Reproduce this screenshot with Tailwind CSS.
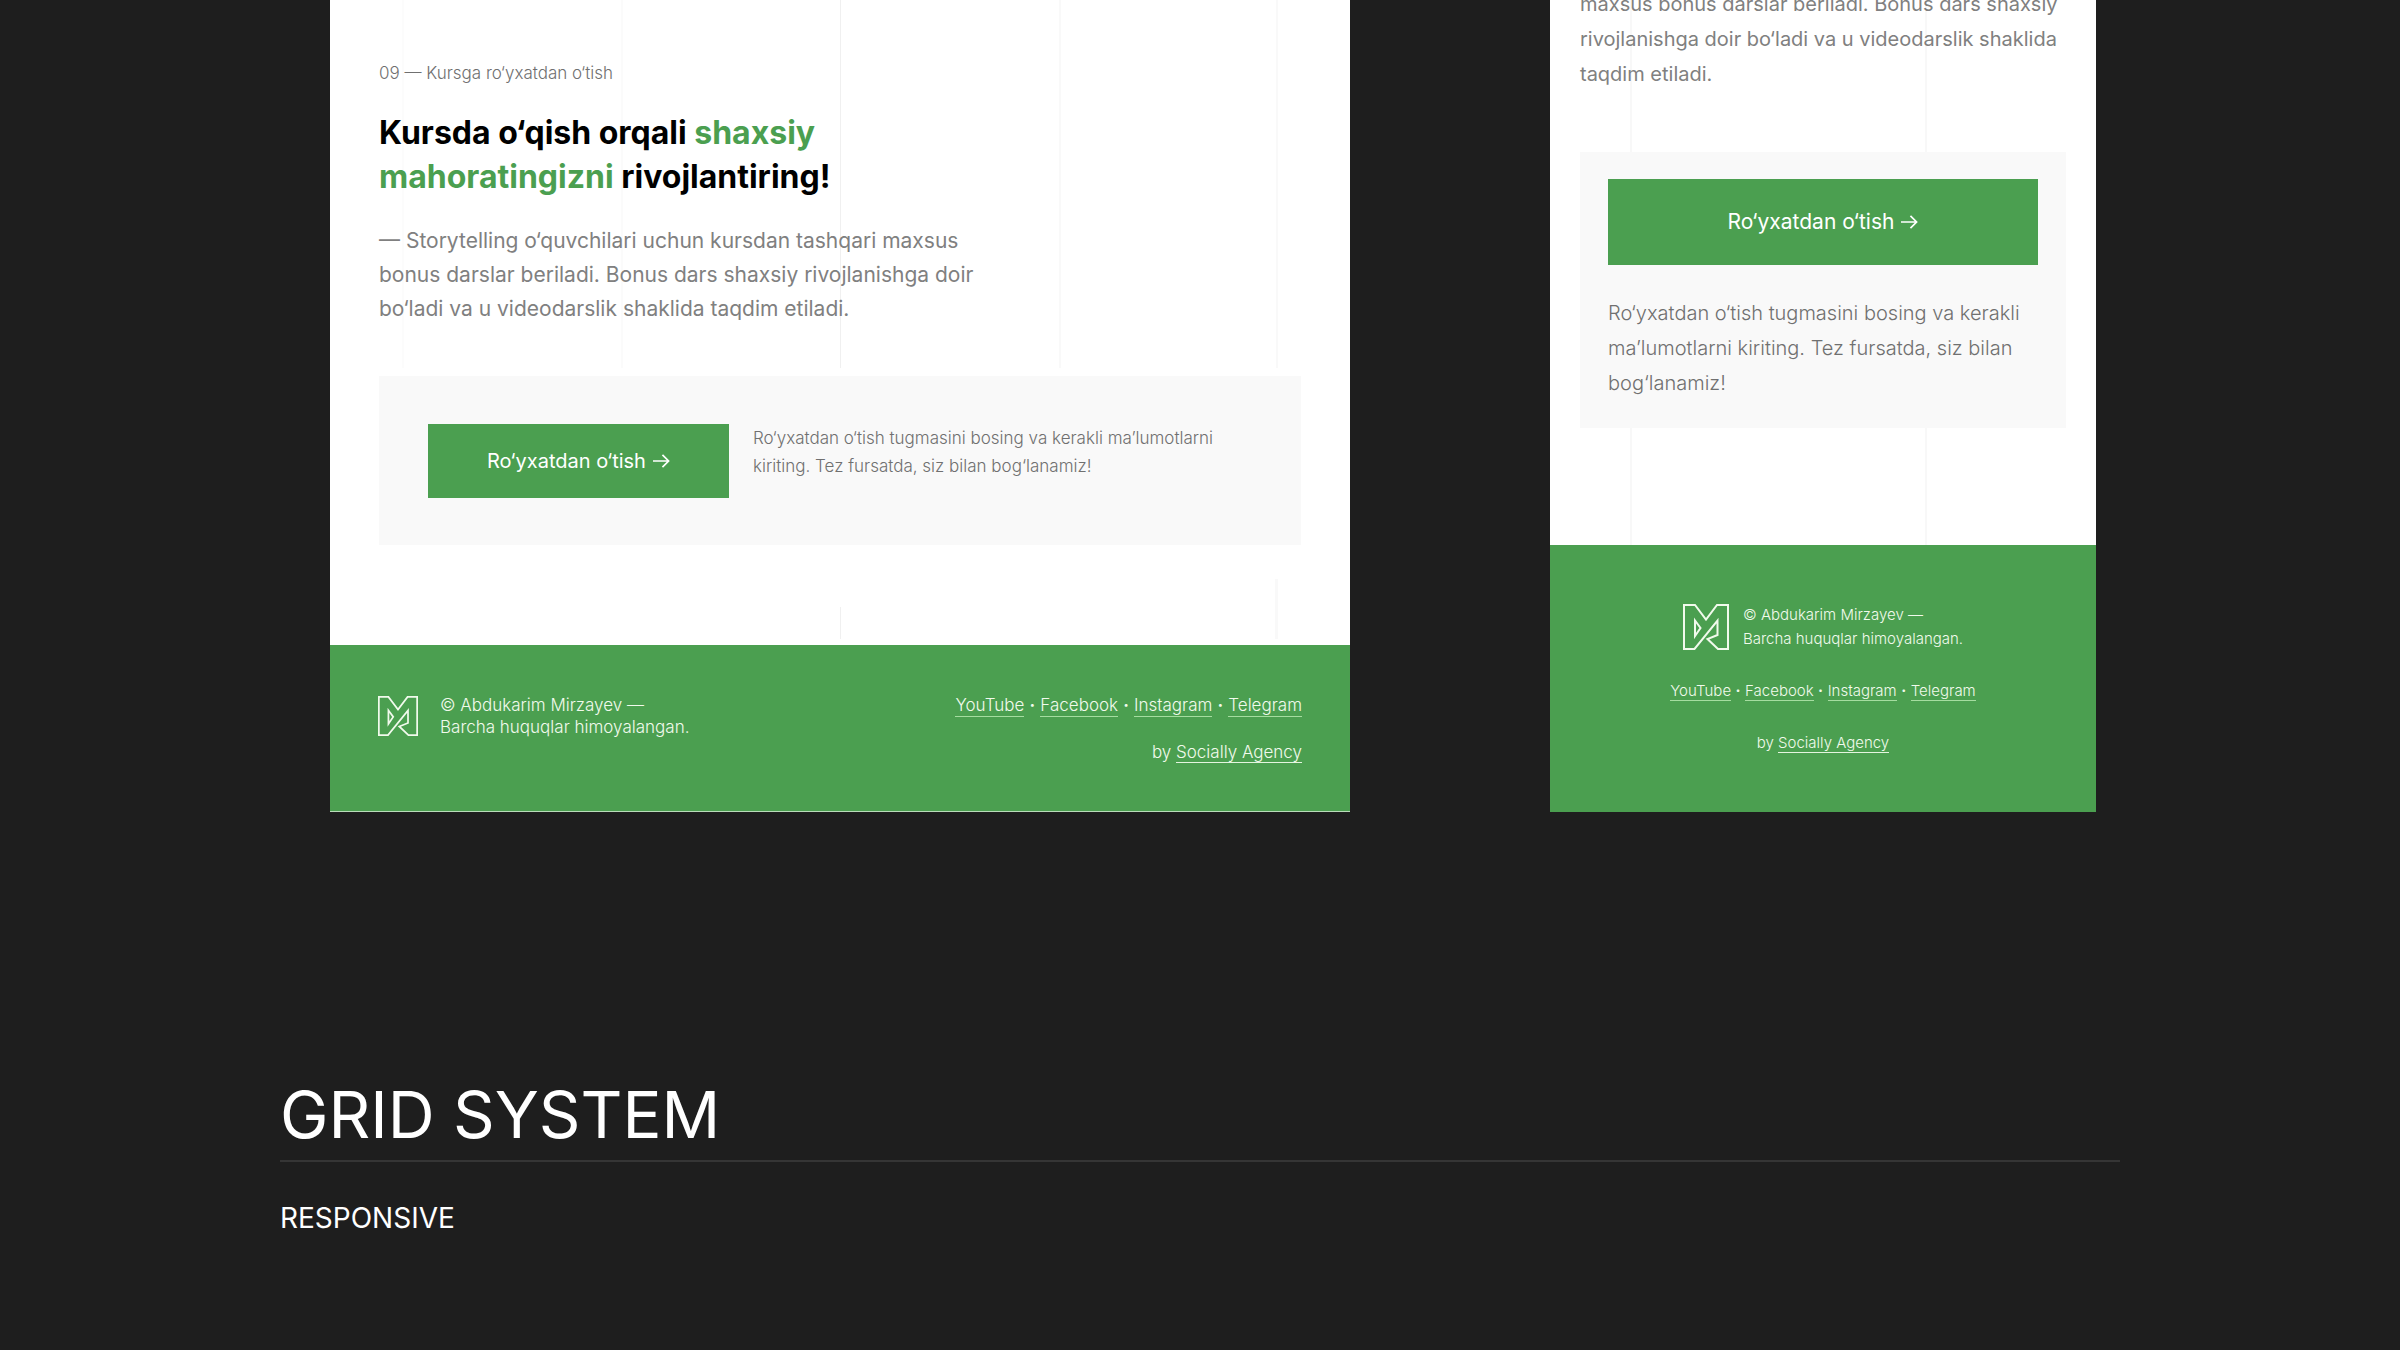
<!DOCTYPE html>
<html lang="uz">
<head>
<meta charset="utf-8">
<meta name="viewport" content="width=device-width, initial-scale=1">
<title>Grid system</title>
<script src="https://cdn.jsdelivr.net/npm/@tailwindcss/browser@4"></script>
</head>
<body class="min-h-screen bg-[#1e1e1e] font-['Inter',sans-serif] [font-variation-settings:'opsz'_32]">
<svg class="hidden" aria-hidden="true">
  <symbol id="logo" viewBox="0 0 46 46">
    <path d="M1 1h11L23 15.500 34 1h11v44H35L24.500 35l10-4V16.500L11.500 45H1z M12 16.500V32l5.500-8z" fill="none" stroke="currentColor" stroke-width="2"/>
  </symbol>
  <symbol id="arrow" viewBox="0 0 18 16">
    <path d="M0 8h16.500M10 1.500 16.500 8 10 14.500" fill="none" stroke="currentColor" stroke-width="1.800"/>
  </symbol>
</svg>

<main class="mx-auto w-full max-w-[1840px]">
  <div class="grid h-[812px] grid-cols-[1020fr_546fr] grid-rows-1 gap-[200px] overflow-hidden pr-6 pl-[50px]">

    <!-- Tablet layout -->
    <article class="flex min-h-0 flex-col justify-end bg-white">
      <section class="relative flex flex-1 flex-col justify-end px-[49px] pb-[100px]">
        <div class="absolute inset-x-[72px] top-0 bottom-[277px] grid grid-cols-4" aria-hidden="true">
          <i class="border-l-2 border-[#fcfcfc]"></i>
          <i class="border-l-2 border-[#fbfbfb]"></i>
          <i class="border-l border-[#f0f0f0]"></i>
          <i class="border-x-2 border-[#f9f9f9]"></i>
        </div>
        <div class="absolute inset-x-[72px] bottom-[6px] grid h-[60px] grid-cols-2 items-end" aria-hidden="true">
          <i class="col-start-2 row-start-1 h-full border-r-3 border-[#f9f9f9]"></i>
          <i class="col-start-2 row-start-1 h-8 border-l border-[#f0f0f0]"></i>
        </div>
        <div class="relative whitespace-nowrap">
          <p class="text-[17px] leading-6 font-light text-[#707070]">09 — Kursga ro‘yxatdan o‘tish</p>
          <h2 class="mt-[26px] text-[32px] leading-[44px] font-bold text-black">Kursda o‘qish orqali <span class="text-[#4b9f50]">shaxsiy<br>mahoratingizni</span> rivojlantiring!</h2>
          <p class="mt-[25px] text-[21px] leading-[34px] text-[#808080]">— Storytelling o‘quvchilari uchun kursdan tashqari maxsus<br>bonus darslar beriladi. Bonus dars shaxsiy rivojlanishga doir<br>bo‘ladi va u videodarslik shaklida taqdim etiladi.</p>
        </div>
        <div class="relative mt-[50px] flex items-start gap-6 bg-[#f9f9f9] px-[49px] pt-12 pb-[47px]">
          <button type="button" class="flex h-[74px] w-[301px] shrink-0 items-center justify-center gap-[7px] bg-[#4b9f50] text-[20px] text-white">Ro‘yxatdan o‘tish <svg class="h-4 w-[17px]" aria-hidden="true"><use href="#arrow"/></svg></button>
          <p class="text-[17px] leading-7 font-light whitespace-nowrap text-[#707070]">Ro‘yxatdan o‘tish tugmasini bosing va kerakli ma’lumotlarni<br>kiriting. Tez fursatda, siz bilan bog‘lanamiz!</p>
        </div>
      </section>
      <footer class="flex h-[167px] shrink-0 items-start justify-between border-b border-[#b9dcb9] bg-[#4b9f50] px-12 pt-[49px] text-[17px] leading-[22px] font-light whitespace-nowrap text-[#f1faec]">
        <div class="flex items-center gap-[22px]">
          <svg class="size-10" role="img" aria-label="Logo"><use href="#logo"/></svg>
          <p>© Abdukarim Mirzayev —<br>Barcha huquqlar himoyalangan.</p>
        </div>
        <div class="text-right">
          <nav class="flex">
            <a href="#" class="border-b border-[#a5dda0]">YouTube</a><span class="w-4 text-center font-bold">·</span>
            <a href="#" class="border-b border-[#a5dda0]">Facebook</a><span class="w-4 text-center font-bold">·</span>
            <a href="#" class="border-b border-[#a5dda0]">Instagram</a><span class="w-4 text-center font-bold">·</span>
            <a href="#" class="border-b border-[#a5dda0]">Telegram</a>
          </nav>
          <p class="mt-6">by <a href="#" class="border-b border-[#e4f5df]">Socially Agency</a></p>
        </div>
      </footer>
    </article>

    <!-- Phone layout -->
    <article class="flex min-h-0 flex-col justify-end bg-white">
      <section class="relative flex flex-1 flex-col justify-end px-[30px] pb-[117px]">
        <div class="absolute inset-y-0 right-[169px] left-[80px] border-x-2 border-[#f8f8f8]" aria-hidden="true"></div>
        <p class="relative text-[20px] leading-[35px] whitespace-nowrap text-[#808080]">maxsus bonus darslar beriladi. Bonus dars shaxsiy<br>rivojlanishga doir bo‘ladi va u videodarslik shaklida<br>taqdim etiladi.</p>
        <div class="relative mt-[60px] bg-[#f9f9f9] px-7 py-[27px]">
          <button type="button" class="flex h-[86px] w-full items-center justify-center gap-[7px] bg-[#4b9f50] text-[21px] text-white">Ro‘yxatdan o‘tish <svg class="h-4 w-[17px]" aria-hidden="true"><use href="#arrow"/></svg></button>
          <p class="mt-[31px] text-[20px] leading-[35px] font-light whitespace-nowrap text-[#707070]">Ro‘yxatdan o‘tish tugmasini bosing va kerakli<br>ma’lumotlarni kiriting. Tez fursatda, siz bilan<br>bog‘lanamiz!</p>
        </div>
      </section>
      <footer class="flex h-[267px] shrink-0 flex-col items-center gap-7 bg-[#4b9f50] pt-[58px] text-[15px] leading-6 font-light whitespace-nowrap text-[#f1faec]">
        <div class="flex items-center gap-[14px]">
          <svg class="size-[46px]" role="img" aria-label="Logo"><use href="#logo"/></svg>
          <p>© Abdukarim Mirzayev —<br>Barcha huquqlar himoyalangan.</p>
        </div>
        <nav>
          <a href="#" class="border-b border-[#a5dda0]">YouTube</a><span class="inline-block w-[14px] text-center font-bold">·</span><a href="#" class="border-b border-[#a5dda0]">Facebook</a><span class="inline-block w-[14px] text-center font-bold">·</span><a href="#" class="border-b border-[#a5dda0]">Instagram</a><span class="inline-block w-[14px] text-center font-bold">·</span><a href="#" class="border-b border-[#a5dda0]">Telegram</a>
        </nav>
        <p>by <a href="#" class="border-b border-[#e4f5df]">Socially Agency</a></p>
      </footer>
    </article>
  </div>

  <header class="pt-[263px] text-white">
    <h1 class="border-b-2 border-[#353535] pb-[5px] text-[65px] leading-[80px]">GRID SYSTEM</h1>
    <p class="mt-[38px] text-[28px] leading-9">RESPONSIVE</p>
  </header>
</main>
</body>
</html>
